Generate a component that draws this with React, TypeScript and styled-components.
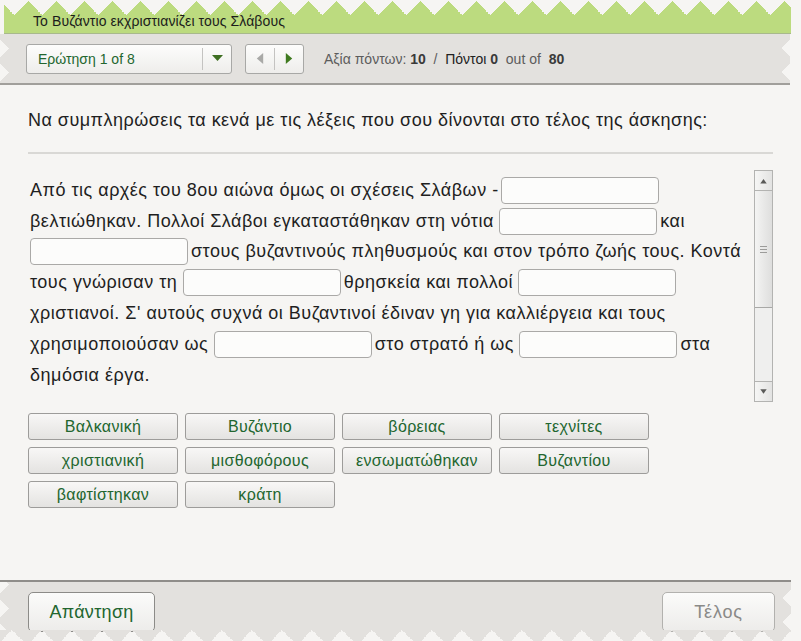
import React from 'react';
import styled, { createGlobalStyle } from 'styled-components';

const GlobalStyle = createGlobalStyle`
  html, body {
    margin: 0;
    padding: 0;
    background: #f6f5f3;
  }
  body {
    font-family: 'Liberation Sans', Arial, sans-serif;
  }
`;

const GREEN = '#bcdb7f';
const GRAY = '#e3e1de';
const PAGE = '#f6f5f3';
const TEXT_GREEN = '#22662f';

const Page = styled.div`
  width: 801px;
  height: 641px;
  display: flex;
  flex-direction: column;
  overflow: hidden;
  background: ${PAGE};
  color: #222;
`;

/* ---------- header ---------- */

const TitleBand = styled.div`
  display: flex;
  flex-direction: column;
  margin: 0 10px 0 4px;
`;

const ZigTop = styled.div<{ $color: string }>`
  height: 15px;
  background: conic-gradient(
      from 135deg at 50% 0,
      ${(p) => p.$color} 0 90deg,
      transparent 90deg
    )
    10px 1px / 28px 14px repeat-x;
`;

const TitleBar = styled.div`
  height: 18px;
  background:
    conic-gradient(from 45deg at 100% 50%, ${PAGE} 0 90deg, transparent 90deg) right 0 / 10px 18px no-repeat,
    ${GREEN};
  border-bottom: 1px solid #a8b98c;
  padding-left: 29px;
  font-size: 14px;
  letter-spacing: 0.1px;
  line-height: 12px;
  color: #1b1b1b;
`;

const Toolbar = styled.div`
  height: 49px;
  margin-right: 11px;
  display: flex;
  align-items: center;
  padding-left: 26px;
  border-bottom: 2px solid #a19f9b;
  background:
    conic-gradient(from 225deg at 100% 50%, ${PAGE} 0 90deg, transparent 90deg) 0 2px / 9px 24px repeat-y,
    conic-gradient(from 45deg at 0 50%, ${PAGE} 0 90deg, transparent 90deg) right 2px / 9px 24px repeat-y,
    ${GRAY};
`;

const Select = styled.div`
  box-sizing: border-box;
  width: 206px;
  height: 30px;
  display: flex;
  border: 1px solid #a8a8a6;
  border-radius: 3px;
  background: linear-gradient(#fdfdfc, #eeedeb);
`;

const SelectLabel = styled.div`
  flex: 1;
  padding-left: 11px;
  font-size: 14px;
  line-height: 28px;
  color: ${TEXT_GREEN};
`;

const SelectArrow = styled.div`
  width: 28px;
  display: flex;
  align-items: center;
  justify-content: center;
  border-left: 1px solid #c4c3c1;
  margin: 3px 0;
`;

const Nav = styled.div`
  box-sizing: border-box;
  width: 59px;
  height: 30px;
  margin-left: 13px;
  display: flex;
  border: 1px solid #a8a8a6;
  border-radius: 3px;
  background: linear-gradient(#fdfdfc, #eeedeb);
`;

const NavHalf = styled.div<{ $divider?: boolean }>`
  flex: 1;
  display: flex;
  align-items: center;
  justify-content: center;
  margin: 3px 0;
  border-left: ${(p) => (p.$divider ? '1px solid #c4c3c1' : 'none')};
`;

const Info = styled.div`
  margin-left: 20px;
  font-size: 14px;
  color: #5c5c5c;
  white-space: pre;
`;

const Num = styled.b`
  color: #3a3a3a;
`;

const Dark = styled.span`
  color: #222;
`;

/* ---------- main ---------- */

const Main = styled.main`
  flex: 1;
  display: flex;
  flex-direction: column;
  padding: 0 28px;
`;

const Prompt = styled.div`
  margin-top: 25px;
  font-size: 18px;
  letter-spacing: 0.48px;
  line-height: 20px;
  color: #1f1f1f;
`;

const Rule = styled.div`
  margin-top: 22px;
  height: 2px;
  width: 745px;
  background: #d9d8d5;
`;

const Reader = styled.div`
  margin-top: 16px;
  height: 232px;
  display: flex;
`;

const Para = styled.div`
  flex: 1;
  padding: 5px 0 0 2px;
  font-size: 18px;
  letter-spacing: 0.5px;
  color: #1f1f1f;
`;

const Line = styled.div`
  height: 30.8px;
  display: flex;
  align-items: center;
  white-space: pre;
`;

const Blank = styled.span<{ $tight?: boolean }>`
  box-sizing: border-box;
  width: 158px;
  height: 27px;
  margin: 0 3px 0 ${(p) => (p.$tight ? '-3px' : '0')};
  border: 1px solid #aaa9a7;
  border-radius: 4px;
  background: #fcfcfb;
  flex: none;
`;

const Scrollbar = styled.div`
  width: 19px;
  display: flex;
  flex-direction: column;
  box-sizing: border-box;
  border: 1px solid #b3b3b1;
  background: #efefee;
`;

const ScrollBtn = styled.div`
  height: 19px;
  display: flex;
  align-items: center;
  justify-content: center;
  background: linear-gradient(90deg, #f6f6f5, #e3e3e2);
  border-bottom: 1px solid #b3b3b1;
  &:last-child {
    border-bottom: none;
    border-top: 1px solid #b3b3b1;
    margin-top: auto;
  }
`;

const Thumb = styled.div`
  height: 116px;
  display: flex;
  align-items: center;
  justify-content: center;
  background: linear-gradient(90deg, #f4f4f3, #dededd);
  border-bottom: 1px solid #a8a8a6;
`;

const Grip = styled.div`
  width: 7px;
  height: 7px;
  background: repeating-linear-gradient(#9c9c9a 0 1px, transparent 1px 3px);
`;

const Words = styled.div`
  margin-top: 11px;
  display: grid;
  grid-template-columns: repeat(4, 150px);
  grid-auto-rows: 27px;
  gap: 7px 7px;
`;

const Word = styled.div`
  box-sizing: border-box;
  display: flex;
  align-items: center;
  justify-content: center;
  border: 1px solid #9d9c9a;
  border-radius: 3px;
  background: linear-gradient(#f8f7f6, #e4e3e1);
  font-size: 16px;
  letter-spacing: 0.35px;
  color: ${TEXT_GREEN};
`;

/* ---------- footer ---------- */

const Footer = styled.footer`
  display: flex;
  flex-direction: column;
`;

const FooterBand = styled.div`
  height: 50px;
  margin-right: 10px;
  border-top: 2px solid #8f8d8a;
  display: flex;
  align-items: flex-start;
  justify-content: space-between;
  padding: 10px 16px 0 28px;
  box-sizing: border-box;
  background:
    conic-gradient(from 225deg at 100% 50%, ${PAGE} 0 90deg, transparent 90deg) 0 14px / 9px 24px repeat-y,
    conic-gradient(from 45deg at 0 50%, ${PAGE} 0 90deg, transparent 90deg) right 4px / 9px 24px repeat-y,
    ${GRAY};
`;

const ZigBottom = styled.div<{ $color: string }>`
  height: 11px;
  margin-right: 10px;
  background: conic-gradient(
      from -45deg at 50% 100%,
      ${(p) => p.$color} 0 90deg,
      transparent 90deg
    )
    12px 0 / 30px 15px repeat-x;
`;

const ActionButton = styled.div<{ $disabled?: boolean; $width: number }>`
  box-sizing: border-box;
  width: ${(p) => p.$width}px;
  height: 40px;
  display: flex;
  align-items: center;
  justify-content: center;
  border: 1px solid ${(p) => (p.$disabled ? '#b2b1ae' : '#8c8b88')};
  border-radius: 5px;
  background: linear-gradient(#fbfbfa, #edecea);
  font-size: 18px;
  letter-spacing: ${(p) => (p.$disabled ? '0.8px' : '0.3px')};
  color: ${(p) => (p.$disabled ? '#8a8a88' : TEXT_GREEN)};
`;

const Tri = ({ dir, color, size = 10 }: { dir: 'up' | 'down' | 'left' | 'right'; color: string; size?: number }) => {
  const pts = {
    up: '0,10 5,3 10,10',
    down: '0,2 10,2 5,9',
    left: '9,0 9,12 2,6',
    right: '2,0 2,12 9,6',
  }[dir];
  const vb = dir === 'left' || dir === 'right' ? '0 0 11 12' : '0 0 10 12';
  return (
    <svg width={size} height={size * 1.1} viewBox={vb}>
      <polygon points={pts} fill={color} />
    </svg>
  );
};

const words = [
  'Βαλκανική',
  'Βυζάντιο',
  'βόρειας',
  'τεχνίτες',
  'χριστιανική',
  'μισθοφόρους',
  'ενσωματώθηκαν',
  'Βυζαντίου',
  'βαφτίστηκαν',
  'κράτη',
];

export default function App() {
  return (
    <Page>
      <GlobalStyle />
      <TitleBand>
        <ZigTop $color={GREEN} />
        <TitleBar>Το Βυζάντιο εκχριστιανίζει τους Σλάβους</TitleBar>
      </TitleBand>
      <Toolbar>
        <Select>
          <SelectLabel>Ερώτηση 1 of 8</SelectLabel>
          <SelectArrow>
            <svg width="11" height="7" viewBox="0 0 11 7">
              <polygon points="0,0 11,0 5.5,6" fill="#3e6f22" />
            </svg>
          </SelectArrow>
        </Select>
        <Nav>
          <NavHalf>
            <Tri dir="left" color="#a9a9a7" />
          </NavHalf>
          <NavHalf $divider>
            <Tri dir="right" color="#3f7a1f" />
          </NavHalf>
        </Nav>
        <Info>
          Αξία πόντων: <Num>10</Num>  /  <Dark>Πόντοι</Dark> <Num>0</Num>  out of  <Num>80</Num>
        </Info>
      </Toolbar>

      <Main>
        <Prompt>Να συμπληρώσεις τα κενά με τις λέξεις που σου δίνονται στο τέλος της άσκησης:</Prompt>
        <Rule />
        <Reader>
          <Para>
            <Line>
              Από τις αρχές του 8ου αιώνα όμως οι σχέσεις Σλάβων - <Blank $tight />
            </Line>
            <Line>
              βελτιώθηκαν. Πολλοί Σλάβοι εγκαταστάθηκαν στη νότια <Blank />
              και
            </Line>
            <Line>
              <Blank />
              στους βυζαντινούς πληθυσμούς και στον τρόπο ζωής τους. Κοντά
            </Line>
            <Line>
              τους γνώρισαν τη <Blank />
              θρησκεία και πολλοί <Blank />
            </Line>
            <Line>χριστιανοί. Σ' αυτούς συχνά οι Βυζαντινοί έδιναν γη για καλλιέργεια και τους</Line>
            <Line>
              χρησιμοποιούσαν ως <Blank />
              στο στρατό ή ως <Blank />
              στα
            </Line>
            <Line>δημόσια έργα.</Line>
          </Para>
          <Scrollbar>
            <ScrollBtn>
              <Tri dir="up" color="#5a5a58" size={7} />
            </ScrollBtn>
            <Thumb>
              <Grip />
            </Thumb>
            <ScrollBtn>
              <Tri dir="down" color="#5a5a58" size={7} />
            </ScrollBtn>
          </Scrollbar>
        </Reader>
        <Words>
          {words.map((w) => (
            <Word key={w}>{w}</Word>
          ))}
        </Words>
      </Main>

      <Footer>
        <FooterBand>
          <ActionButton $width={127}>Απάντηση</ActionButton>
          <ActionButton $width={113} $disabled>
            Τέλος
          </ActionButton>
        </FooterBand>
        <ZigBottom $color={GRAY} />
      </Footer>
    </Page>
  );
}
